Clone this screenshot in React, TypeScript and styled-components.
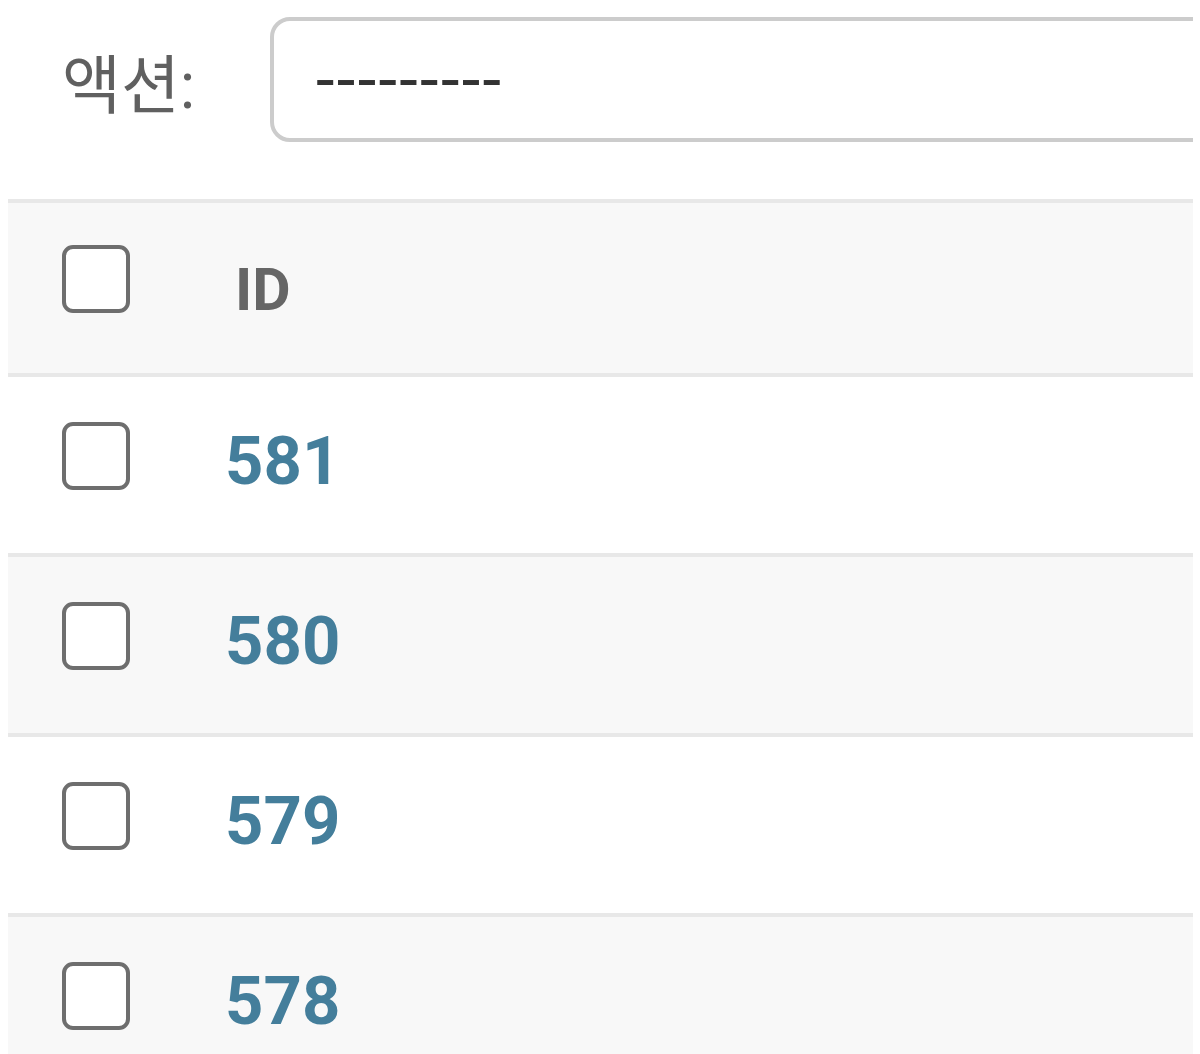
import React from "react";
import styled, { createGlobalStyle } from "styled-components";

const GlobalStyle = createGlobalStyle`
  html, body {
    margin: 0;
    padding: 0;
    background: #fff;
  }
  body {
    font-family: Roboto, "Noto Sans CJK KR", "Liberation Sans", sans-serif;
    color: #333;
  }
`;

const Page = styled.div`
  width: 1185px;
  margin-left: 8px;
  overflow: hidden;
`;

// 상단 액션 바
const Actions = styled.div`
  display: flex;
  align-items: center;
  padding: 17px 0 57px 54px;
`;

const ActionLabel = styled.label`
  width: 208px;
  flex-shrink: 0;
  font-family: Roboto, "Noto Sans CJK KR", sans-serif;
  font-size: 64px;
  color: #606060;
  white-space: nowrap;
`;

const SelectBox = styled.div`
  box-sizing: border-box;
  flex-shrink: 0;
  width: 1100px;
  height: 125px;
  border: 4px solid #cccccc;
  border-radius: 20px;
  padding-left: 42px;
  display: flex;
  align-items: center;
  font-size: 67px;
  letter-spacing: 2.3px;
  color: #333;
  background: #fff;
`;

// 결과 테이블
const Table = styled.div`
  display: flex;
  flex-direction: column;
`;

const Row = styled.div<{ $shaded?: boolean; $head?: boolean }>`
  display: flex;
  align-items: flex-start;
  height: ${(p) => (p.$head ? 170 : 176)}px;
  background: ${(p) => (p.$shaded ? "#f8f8f8" : "#fff")};
  border-top: ${(p) => (p.$head ? "4px solid #e8e8e8" : "none")};
  border-bottom: 4px solid #e8e8e8;
`;

const CheckCell = styled.div<{ $head?: boolean }>`
  width: 217px;
  flex-shrink: 0;
  padding: ${(p) => (p.$head ? 42 : 45)}px 0 0 54px;
  box-sizing: border-box;
`;

const Checkbox = styled.span`
  display: block;
  box-sizing: border-box;
  width: 68px;
  height: 68px;
  border: 4px solid #6e6e6e;
  border-radius: 11px;
  background: #fff;
`;

const HeadText = styled.div`
  padding: 57px 0 0 10px;
  font-size: 59px;
  line-height: 1;
  font-weight: 700;
  color: #666;
  text-transform: uppercase;
`;

const IdLink = styled.a`
  display: block;
  padding-top: 51px;
  font-size: 67px;
  line-height: 1;
  font-weight: 700;
  color: #447e9b;
  text-decoration: none;
`;

const ids = [581, 580, 579, 578];

const App: React.FC = () => {
  return (
    <>
      <GlobalStyle />
      <Page>
        <Actions>
          <ActionLabel>액션:</ActionLabel>
          <SelectBox>---------</SelectBox>
        </Actions>
        <Table>
          <Row $head $shaded>
            <CheckCell $head>
              <Checkbox />
            </CheckCell>
            <HeadText>ID</HeadText>
          </Row>
          {ids.map((id, i) => (
            <Row key={id} $shaded={i % 2 === 1}>
              <CheckCell>
                <Checkbox />
              </CheckCell>
              <IdLink href="#">{id}</IdLink>
            </Row>
          ))}
        </Table>
      </Page>
    </>
  );
};

export default App;
